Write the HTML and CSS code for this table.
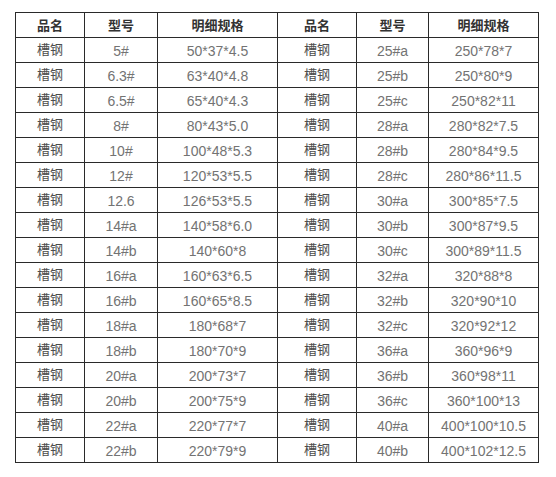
FILE: index.html
```html
<!DOCTYPE html>
<html lang="zh">
<head>
<meta charset="utf-8">
<link rel="stylesheet" href="styles.css">
</head>
<body>
<table class="spec">
<colgroup>
<col class="c1"><col class="c2"><col class="c3"><col class="c4"><col class="c5"><col class="c6">
</colgroup>
<thead>
<tr><th>品名</th><th>型号</th><th>明细规格</th><th>品名</th><th>型号</th><th>明细规格</th></tr>
</thead>
<tbody>
<tr><td class="cn">槽钢</td><td>5#</td><td>50*37*4.5</td><td class="cn">槽钢</td><td>25#a</td><td>250*78*7</td></tr>
<tr><td class="cn">槽钢</td><td>6.3#</td><td>63*40*4.8</td><td class="cn">槽钢</td><td>25#b</td><td>250*80*9</td></tr>
<tr><td class="cn">槽钢</td><td>6.5#</td><td>65*40*4.3</td><td class="cn">槽钢</td><td>25#c</td><td>250*82*11</td></tr>
<tr><td class="cn">槽钢</td><td>8#</td><td>80*43*5.0</td><td class="cn">槽钢</td><td>28#a</td><td>280*82*7.5</td></tr>
<tr><td class="cn">槽钢</td><td>10#</td><td>100*48*5.3</td><td class="cn">槽钢</td><td>28#b</td><td>280*84*9.5</td></tr>
<tr><td class="cn">槽钢</td><td>12#</td><td>120*53*5.5</td><td class="cn">槽钢</td><td>28#c</td><td>280*86*11.5</td></tr>
<tr><td class="cn">槽钢</td><td>12.6</td><td>126*53*5.5</td><td class="cn">槽钢</td><td>30#a</td><td>300*85*7.5</td></tr>
<tr><td class="cn">槽钢</td><td>14#a</td><td>140*58*6.0</td><td class="cn">槽钢</td><td>30#b</td><td>300*87*9.5</td></tr>
<tr><td class="cn">槽钢</td><td>14#b</td><td>140*60*8</td><td class="cn">槽钢</td><td>30#c</td><td>300*89*11.5</td></tr>
<tr><td class="cn">槽钢</td><td>16#a</td><td>160*63*6.5</td><td class="cn">槽钢</td><td>32#a</td><td>320*88*8</td></tr>
<tr><td class="cn">槽钢</td><td>16#b</td><td>160*65*8.5</td><td class="cn">槽钢</td><td>32#b</td><td>320*90*10</td></tr>
<tr><td class="cn">槽钢</td><td>18#a</td><td>180*68*7</td><td class="cn">槽钢</td><td>32#c</td><td>320*92*12</td></tr>
<tr><td class="cn">槽钢</td><td>18#b</td><td>180*70*9</td><td class="cn">槽钢</td><td>36#a</td><td>360*96*9</td></tr>
<tr><td class="cn">槽钢</td><td>20#a</td><td>200*73*7</td><td class="cn">槽钢</td><td>36#b</td><td>360*98*11</td></tr>
<tr><td class="cn">槽钢</td><td>20#b</td><td>200*75*9</td><td class="cn">槽钢</td><td>36#c</td><td>360*100*13</td></tr>
<tr><td class="cn">槽钢</td><td>22#a</td><td>220*77*7</td><td class="cn">槽钢</td><td>40#a</td><td>400*100*10.5</td></tr>
<tr><td class="cn">槽钢</td><td>22#b</td><td>220*79*9</td><td class="cn">槽钢</td><td>40#b</td><td>400*102*12.5</td></tr>
</tbody>
</table>
</body>
</html>
```
FILE: styles.css
```css
html, body {
  margin: 0;
  padding: 0;
  background: #ffffff;
}

body {
  padding: 12px 0 0 15px;
  font-family: "Liberation Sans", Arial, "Noto Sans CJK SC", sans-serif;
}

.spec {
  border-collapse: collapse;
  table-layout: fixed;
  width: 523px;
}

.c1 { width: 69px; }
.c2 { width: 73px; }
.c3 { width: 120px; }
.c4 { width: 79px; }
.c5 { width: 72px; }
.c6 { width: 110px; }

.spec th,
.spec td {
  border: 1px solid #2a2a2a;
  height: 24px;
  padding: 0;
  text-align: center;
  vertical-align: middle;
  white-space: nowrap;
  line-height: 16px;
}

.spec th {
  font-family: "Noto Sans CJK SC", sans-serif;
  font-size: 13px;
  font-weight: bold;
  color: #333333;
}

.spec td {
  font-size: 14px;
  color: #737373;
  padding-top: 2px;
  height: 22px;
}

.spec td.cn {
  font-family: "Noto Sans CJK SC", sans-serif;
  font-size: 13px;
  color: #4d4d4d;
  padding-top: 0;
  padding-bottom: 2px;
}
```
